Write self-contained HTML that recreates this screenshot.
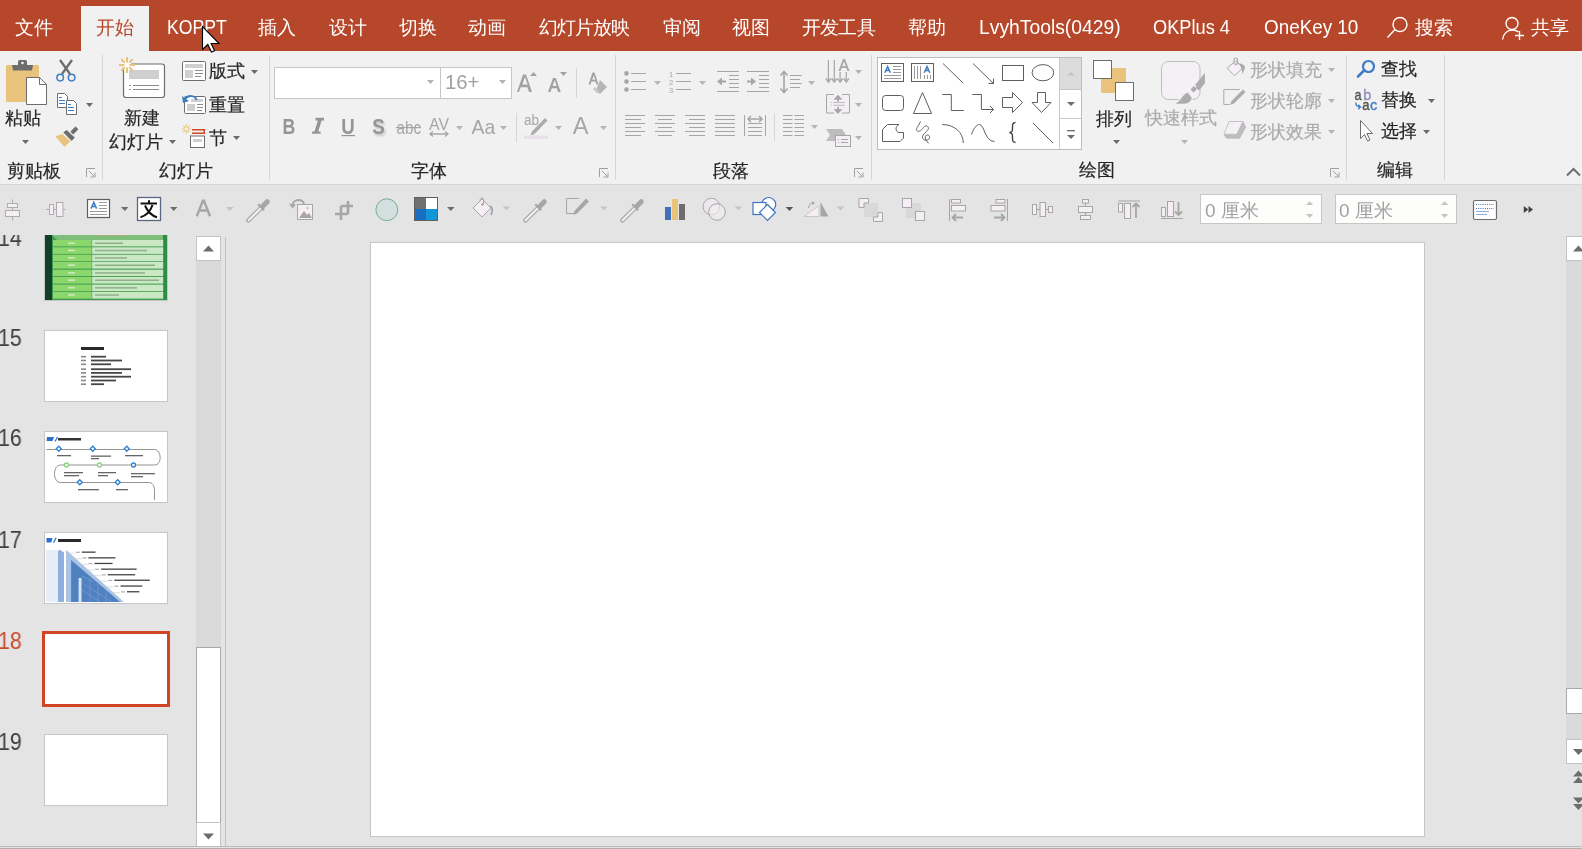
<!DOCTYPE html>
<html><head><meta charset="utf-8">
<style>
*{margin:0;padding:0;box-sizing:border-box}
html,body{width:1582px;height:849px;overflow:hidden;background:#e4e4e4;font-family:"Liberation Sans",sans-serif;position:relative}
.a{position:absolute;white-space:nowrap;will-change:transform}
#ov{position:absolute;left:0;top:0;width:1582px;height:849px;overflow:visible}
.tab{will-change:transform;position:absolute;top:17px;font-size:18.5px;line-height:22px;color:#fff;white-space:nowrap}
.lt{display:inline-block;transform-origin:0 50%;font-size:19.5px;position:relative;top:-1px}
.t{position:absolute;font-size:18px;line-height:22px;color:#262626;white-space:nowrap;will-change:transform;-webkit-text-stroke:.2px currentColor}
.d{color:#ababab}
.num{will-change:transform;position:absolute;left:-2px;font-size:23px;line-height:26px;color:#404040;transform:scaleX(.93);transform-origin:0 0}
.th{position:absolute;left:44px;width:124px;height:72px;background:#fff;border:1px solid #c6c6c6}
</style></head><body>
<!-- title bar -->
<div class="a" style="left:0;top:0;width:1582px;height:51px;background:#b7472a"></div>
<div class="a" style="left:81px;top:6px;width:68px;height:46px;background:#f1f1f1"></div>
<!-- ribbon -->
<div class="a" style="left:0;top:51px;width:1582px;height:133px;background:#f1f1f1"></div>
<div class="a" style="left:0;top:184px;width:1582px;height:1px;background:#d5d5d5"></div>
<!-- slide -->
<div class="a" style="left:370px;top:242px;width:1055px;height:595px;background:#fff;border:1px solid #c6c6c6"></div>

<svg id="ov" viewBox="0 0 1582 849"><defs><filter id="blur1" x="-50%" y="-50%" width="200%" height="200%"><feGaussianBlur stdDeviation=".8"/></filter></defs>
<!-- separators -->
<g fill="#d6d6d6">
<rect x="102" y="55" width="1" height="125"/>
<rect x="269" y="55" width="1" height="125"/>
<rect x="615" y="55" width="1" height="125"/>
<rect x="871" y="55" width="1" height="125"/>
<rect x="1346" y="55" width="1" height="125"/>
<rect x="1444" y="55" width="1" height="125"/>
<rect x="576" y="68" width="1" height="30"/>
<rect x="516" y="113" width="1" height="29"/>
<rect x="774" y="113" width="1" height="28"/>
</g>
<!-- dropdown arrows dark -->
<g fill="#6b6b6b">
<path d="M22 140h7l-3.5 4z"/>
<path d="M86 103h7l-3.5 4z"/>
<path d="M169 140h7l-3.5 4z"/>
<path d="M251 70h7l-3.5 4z"/>
<path d="M233 136h7l-3.5 4z"/>
<path d="M1113 140h7l-3.5 4z"/>
<path d="M1428 99h7l-3.5 4z"/>
<path d="M1423 130h7l-3.5 4z"/>
</g>
<!-- light arrows -->
<g fill="#b4b4b4">
<path d="M427 80h7l-3.5 4z"/>
<path d="M499 80h7l-3.5 4z"/>
<path d="M456 126h7l-3.5 4z"/>
<path d="M500 126h7l-3.5 4z"/>
<path d="M555 126h7l-3.5 4z"/>
<path d="M600 126h7l-3.5 4z"/>
<path d="M654 81h7l-3.5 4z"/>
<path d="M699 81h7l-3.5 4z"/>
<path d="M808 81h7l-3.5 4z"/>
<path d="M855 70h7l-3.5 4z"/>
<path d="M855 103h7l-3.5 4z"/>
<path d="M811 125h7l-3.5 4z"/>
<path d="M855 136h7l-3.5 4z"/>
<path d="M1181 140h7l-3.5 4z"/>
<path d="M1328 68h7l-3.5 4z"/>
<path d="M1328 99h7l-3.5 4z"/>
<path d="M1328 130h7l-3.5 4z"/>
</g>
<!-- dialog launchers -->
<g fill="none" stroke="#a0a0a0" stroke-width="1">
<path d="M86.5 177v-8.5h8.5 M89 171l5.5 5.5 M95 172.5v4.5h-4.5"/>
<path d="M599.5 177v-8.5h8.5 M602 171l5.5 5.5 M608 172.5v4.5h-4.5"/>
<path d="M854.5 177v-8.5h8.5 M857 171l5.5 5.5 M863 172.5v4.5h-4.5"/>
<path d="M1330.5 177v-8.5h8.5 M1333 171l5.5 5.5 M1339 172.5v4.5h-4.5"/>
</g>
<!-- collapse chevron -->
<path d="M1567 175.5l6.5-6.5 6.5 6.5" fill="none" stroke="#6d6d6d" stroke-width="2"/>

<!-- ===== Clipboard ===== -->
<rect x="6" y="65" width="33" height="37" rx="1.5" fill="#e9c27b"/>
<path d="M12 65h21l-1 5.5h-19z" fill="#6d6d6d"/>
<rect x="18" y="60" width="9" height="6" rx="1.5" fill="#6d6d6d"/>
<circle cx="22.5" cy="63" r="1.3" fill="#f1f1f1"/>
<path d="M26.5 77.5h13l7 7v20h-20z" fill="#fff" stroke="#6d6d6d" stroke-width="1"/>
<path d="M39.5 77.5v7h7" fill="none" stroke="#6d6d6d" stroke-width="1"/>
<!-- scissors -->
<path d="M60 60l10 14M72 60l-10 14" stroke="#6d6d6d" stroke-width="2.3" fill="none"/>
<circle cx="60.2" cy="77.6" r="3.3" fill="none" stroke="#3e7cc4" stroke-width="1.5"/>
<circle cx="71.6" cy="77.6" r="3.3" fill="none" stroke="#3e7cc4" stroke-width="1.5"/>
<!-- copy -->
<path d="M57.5 93.5h7l3 3v11h-10z" fill="#fff" stroke="#6d6d6d"/>
<path d="M66.5 100.5h7l3 3v11h-10z" fill="#fff" stroke="#6d6d6d"/>
<g stroke="#3e7cc4" stroke-width="1"><path d="M59 97.5h3M59 100.5h6M59 103.5h6M68 104.5h3M68 107.5h6M68 110.5h6"/></g>
<!-- format painter -->
<path d="M55.3 136.3l7.1-2.3 7.9 7.2-5.8 5.8z" fill="#e9c27b"/>
<path d="M64.1 132.4l2.5-1.6 7.4 6.9-2.4 2.4z" fill="#6d6d6d" stroke="#6d6d6d" stroke-width="1.2" stroke-linejoin="round"/>
<path d="M70.9 131.7l4.6-4.8 2.4 2.3-4.6 4.8z" fill="#6d6d6d" stroke="#6d6d6d" stroke-width="1" stroke-linejoin="round"/>

<!-- ===== New slide ===== -->
<rect x="123.5" y="64" width="41" height="33.5" rx="2.5" fill="#fff" stroke="#6d6d6d" stroke-width="1.2"/>
<rect x="129" y="70" width="30" height="9" fill="#cfcfcf"/>
<g stroke="#8d8d8d" stroke-width="1"><path d="M129 85.5h2M133 85.5h26M129 89.5h2M133 89.5h26"/></g>
<circle cx="127" cy="65" r="4.5" fill="#fff"/><g stroke="#e9c27b" stroke-width="2"><path d="M127 57v5.5M127 67.5v5.5M119 65h5.5M129.5 65h5.5M121.3 59.3l3.6 3.6M129.1 67.1l3.6 3.6M132.7 59.3l-3.6 3.6M124.9 67.1l-3.6 3.6"/></g>
<!-- layout -->
<rect x="182.5" y="61.5" width="23" height="19" rx="1" fill="#fff" stroke="#6d6d6d"/>
<rect x="185" y="64" width="18" height="4" fill="#cfcfcf"/>
<rect x="185" y="70" width="8" height="8" fill="#cfcfcf"/>
<g stroke="#8d8d8d"><path d="M195 70.5h8M195 73.5h8M195 76.5h6"/></g>
<!-- reset -->
<rect x="184.5" y="96.5" width="21" height="17" rx="1" fill="#fff" stroke="#6d6d6d"/>
<rect x="187" y="104" width="8" height="7" fill="#cfcfcf"/>
<rect x="191" y="99" width="12" height="3" fill="#cfcfcf"/>
<g stroke="#8d8d8d"><path d="M197 104.5h6M197 107.5h6M197 110.5h5"/></g>
<path d="M196.5 100c-1-4.5-8-5.5-11.5-1" fill="none" stroke="#3e7cc4" stroke-width="2"/>
<path d="M182 96l1 7 6-2z" fill="#3e7cc4"/>
<!-- section -->
<g stroke="#e9c27b" stroke-width="1.2"><path d="M186.3 124.5v3M186.3 130.5v3M181.8 129h3M187.8 129h3M183.2 125.9l2 2M187.4 130.1l2 2M189.4 125.9l-2 2M185.2 130.1l-2 2"/></g>
<path d="M192 129.8h12.3v3.5h-12.3" fill="none" stroke="#d24726" stroke-width="1.5"/>
<rect x="190.5" y="136" width="14" height="11.5" fill="#fff" stroke="#6d6d6d"/>
<rect x="193" y="139" width="9" height="3" fill="#cfcfcf"/>

<!-- ===== Font ===== -->
<rect x="274.5" y="67.5" width="166" height="31" fill="#fff" stroke="#c6c6c6"/>
<rect x="440.5" y="67.5" width="71" height="31" fill="#fff" stroke="#c6c6c6"/>
<path d="M427 80h7l-3.5 4z" fill="#b4b4b4"/>
<path d="M499 80h7l-3.5 4z" fill="#b4b4b4"/>
<!-- grow/shrink -->
<g fill="#a2a2a2">
<path d="M517 92l6-17.5h3l6 17.5h-3l-1.6-4.8h-6.8l-1.6 4.8zM522.4 84.6h5.2l-2.6-7.6z"/>
<path d="M530 76l3.5-4 3.5 4z"/>
<path d="M548 92l5-14h2.8l5 14h-2.7l-1.3-3.8h-5l-1.3 3.8zM552.6 85.9h4l-2-6z"/>
<path d="M560 72h7l-3.5 4z"/>
</g>
<!-- clear formatting -->
<path d="M588.5 84.5l4-12h2l4 12h-2l-1-3h-4l-1 3zM592.3 79.7h2.9l-1.45-4.5z" fill="#a2a2a2"/>
<path d="M600 80l7 7-7 7-4-4z" fill="#b5b5b5"/>
<path d="M595 87l4.5 4.5-2 2-4.5-4.5z" fill="#c8c8c8"/>
<!-- B I U S -->
<text x="282.5" y="133.7" font-family="Liberation Sans" font-weight="bold" font-size="22" fill="#959595" textLength="12.8" lengthAdjust="spacingAndGlyphs">B</text>
<path d="M315.5 117.8h8.5v2.6h-2.4l-3.4 11.1h2.4v2.2h-8.5v-2.2h2.4l3.4-11.1h-2.4z" fill="#959595"/>
<text x="341.3" y="133.7" font-family="Liberation Sans" font-weight="bold" font-size="22" fill="#959595" textLength="13.5" lengthAdjust="spacingAndGlyphs">U</text>
<rect x="341.5" y="135" width="13.5" height="1.2" fill="#959595"/>
<text x="373.5" y="135.5" font-family="Liberation Sans" font-weight="bold" font-size="22" fill="#c4c4c4" filter="url(#blur1)" textLength="12.5" lengthAdjust="spacingAndGlyphs">S</text>
<text x="372.3" y="133.7" font-family="Liberation Sans" font-weight="bold" font-size="22" fill="#959595" textLength="12.5" lengthAdjust="spacingAndGlyphs">S</text>
<text x="396.5" y="133.7" font-family="Liberation Sans" font-size="18.5" fill="#a6a6a6" textLength="24.5" lengthAdjust="spacingAndGlyphs">abc</text>
<rect x="396" y="127" width="25" height="1.2" fill="#a6a6a6"/>
<text x="429" y="129.5" font-family="Liberation Sans" font-size="16" fill="#a6a6a6" textLength="20" lengthAdjust="spacingAndGlyphs">AV</text>
<path d="M430 134h18M433 131.5l-3 2.5 3 2.5M445 131.5l3 2.5-3 2.5" fill="none" stroke="#a6a6a6" stroke-width="1.3"/>
<text x="471.5" y="133.7" font-family="Liberation Sans" font-size="21" fill="#a6a6a6" textLength="23.7" lengthAdjust="spacingAndGlyphs">Aa</text>
<!-- highlight -->
<text x="524" y="125" font-family="Liberation Sans" font-size="14" fill="#a6a6a6" textLength="15" lengthAdjust="spacingAndGlyphs">ab</text>
<path d="M545 118l2.5 2.5-13 13.5-4 1.5 1.5-4z" fill="#ababab"/>
<rect x="524" y="135.5" width="24" height="3.5" fill="#e8dfe8"/>
<!-- font color -->
<text x="572.7" y="133.7" font-family="Liberation Sans" font-size="23" fill="#a6a6a6" textLength="15.8" lengthAdjust="spacingAndGlyphs">A</text>

<!-- ===== Paragraph ===== -->
<g fill="#a6a6a6">
<circle cx="626.5" cy="73.4" r="2.3"/><circle cx="626.5" cy="81.6" r="2.3"/><circle cx="626.5" cy="89.5" r="2.3"/>
</g>
<g stroke="#a6a6a6" stroke-width="1" fill="none">
<path d="M631 73.5h15M631 81.5h15M631 89.5h15"/>
<path d="M676 73.5h15M676 81.5h15M676 89.5h15"/>
<path d="M717 71.5h22M729 75.5h10M729 79.5h10M729 83.5h10M729 87.5h10M717 91.5h22"/>
<path d="M747 71.5h22M759 75.5h10M759 79.5h10M759 83.5h10M759 87.5h10M747 91.5h22"/>
<path d="M790 75.5h12M790 79.5h10M790 83.5h12M790 87.5h10"/>
</g>
<g font-family="Liberation Sans" font-size="7.5" fill="#a6a6a6"><text x="669" y="77">1</text><text x="669" y="85">2</text><text x="669" y="93">3</text></g>
<path d="M717 81.5l5-4v3h4v2h-4v3z" fill="#a6a6a6"/>
<path d="M756 81.5l-5-4v3h-4v2h4v3z" fill="#a6a6a6"/>
<path d="M784 72v20M780.5 75.5l3.5-4 3.5 4M780.5 88.5l3.5 4 3.5-4" fill="none" stroke="#a6a6a6" stroke-width="1.6"/>
<!-- text direction -->
<g fill="none" stroke="#a6a6a6" stroke-width="1.2"><path d="M828.4 60v20M834.3 60v20M840.1 72v8M846.3 72v8"/><path d="M825.9 78.5l2.5 3.5 2.5-3.5M831.8 78.5l2.5 3.5 2.5-3.5M837.6 78.5l2.5 3.5 2.5-3.5M843.8 78.5l2.5 3.5 2.5-3.5" stroke-width="1.5"/></g>
<path d="M838.5 71l4.5-12h2l4.5 12h-2l-1.1-3h-4.8l-1.1 3zM842.2 66.3h3.6l-1.8-5z" fill="#a6a6a6"/>
<!-- align text -->
<rect x="826.5" y="94.5" width="23" height="18.5" fill="#f4eff4"/>
<path d="M834 94.5h-7.5v18.5h7.5M842 94.5h7.5v18.5h-7.5" fill="none" stroke="#a6a6a6"/>
<path d="M838 96v5.5M838 107v5.5" fill="none" stroke="#a6a6a6" stroke-width="1.8"/>
<path d="M834.3 99.2l3.7-4 3.7 4zM834.3 109.5l3.7 4 3.7-4z" fill="#a6a6a6" stroke="#a6a6a6" stroke-width=".8" stroke-linejoin="round"/>
<path d="M831 102.5h1M833.5 102.5h11.5M831 105.3h1M833.5 105.3h11.5" stroke="#b4b4b4" stroke-width=".9"/>
<!-- smartart -->
<path d="M826 129h16l4 6-4 6h-16l4-6z" fill="#bdbdbd"/>
<rect x="835.5" y="135.5" width="15" height="11" fill="#f4eff4" stroke="#a6a6a6"/>
<path d="M838 139.5h1M841 139.5h7M838 142.5h1M841 142.5h7" stroke="#a6a6a6"/>
<!-- aligns -->
<g stroke="#a6a6a6" stroke-width="1" fill="none">
<path d="M625 115.5h20M625 119.5h16M625 123.5h20M625 127.5h16M625 131.5h20M625 135.5h16"/>
<path d="M655 115.5h20M658 119.5h14M655 123.5h20M658 127.5h14M655 131.5h20M658 135.5h14"/>
<path d="M685 115.5h20M689 119.5h16M685 123.5h20M689 127.5h16M685 131.5h20M689 135.5h16"/>
<path d="M715 115.5h20M715 119.5h20M715 123.5h20M715 127.5h20M715 131.5h20M715 135.5h20"/>
<path d="M744.5 115v21M765.5 115v21M748 123.5h14M748 127.5h14M748 131.5h14M748 135.5h14"/>
<path d="M783 115.5h9.5M783 119.5h9.5M783 123.5h9.5M783 127.5h9.5M783 131.5h9.5M783 135.5h9.5M794.5 115.5h9.5M794.5 119.5h9.5M794.5 123.5h9.5M794.5 127.5h9.5M794.5 131.5h9.5M794.5 135.5h9.5"/>
</g>
<path d="M748 119h14M751 116l-3 3 3 3M759 116l3 3-3 3" fill="none" stroke="#a6a6a6" stroke-width="1.5"/>
<!-- ===== Drawing gallery ===== -->
<rect x="877.5" y="57.5" width="204" height="92" fill="#fff" stroke="#bdbdbd"/>
<rect x="1060" y="58" width="21" height="31.5" fill="#dcdcdc"/>
<path d="M1059.5 58v91M1060 89.5h21M1060 118.5h21" stroke="#c8c8c8" fill="none"/>
<path d="M1067.5 75.5l3.5-3.5 3.5 3.5z" fill="#c2c2c2"/>
<path d="M1067 102h8l-4 4z" fill="#6d6d6d"/>
<path d="M1067 130.5h8M1067 135h8l-4 4z" fill="#6d6d6d" stroke="#6d6d6d" stroke-width="0"/>
<rect x="1067" y="130" width="8" height="1.3" fill="#6d6d6d"/>
<g fill="none" stroke="#5f5f5f" stroke-width="1">
<rect x="881.5" y="63.5" width="22" height="18"/>
<path d="M893 66.5h8M893 69.5h8M893 72.5h8M884 75.5h17M884 78.5h17" stroke="#9a9a9a"/>
<rect x="911.5" y="63.5" width="22" height="18"/>
<path d="M914.5 66v13M917.5 66v13M920.5 66v13M924.5 75v4M927.5 75v4M930.5 75v4" stroke="#9a9a9a"/>
<path d="M943 63.5l20 19.5"/>
<path d="M973 63.5l20.5 20M993.5 78.5v5h-5"/>
<rect x="1002.5" y="65.5" width="21" height="15"/>
<ellipse cx="1042.9" cy="72.7" rx="10.8" ry="8.1"/>
<rect x="882.5" y="95.5" width="21" height="15" rx="3"/>
<path d="M922.5 92.5l9 21h-18z"/>
<path d="M942.3 94.5h9v16h12.5"/>
<path d="M972.4 94.5h9v15h12.5M990 106l3.5 3.5-3.5 3.5"/>
<path d="M1002.5 97.5h10v-5l10 10-10 10v-5h-10z"/>
<path d="M1037.5 92.5h8v10h5.5l-9.5 10-9.5-10h5.5z"/>
<path d="M882.5 129.5l5-5h11.5c-4 2-4 7 0 8h4.5v5.5l-3.5 3.5h-17.5z"/>
<path d="M920.4 121.4C919.5 125 915.5 128 916.8 130.5 918 132.5 921 131 923.5 127.5 925.5 125 928.5 125.5 928.4 128.6 928.2 131 922 134 922.5 137.5 923 140.5 927 141 929 139 930.5 137 929 134.5 927 135 924.5 135.5 924.5 139 928.6 143.4" stroke-width="1"/>
<path d="M942.3 124.5c12 0 21 8 21 18.5"/>
<path d="M971.5 134.5c2-6 5-10 8-10 5 0 5 17 15 17"/>
<path d="M1015.5 122.5c-3 0-3 2-3 5s0 4.5-3 5c3 .5 3 2 3 5s0 4.5 3 5" stroke-width="1.4" stroke="#404040"/>
<path d="M1033 123l20 20"/>
</g>
<path d="M884.8 72.8l2.8-6.2 2.8 6.2M885.9 70.6h3.4" fill="none" stroke="#3e7cc4" stroke-width="1.5"/>
<path d="M924.2 72.8l2.8-6.2 2.8 6.2M925.3 70.6h3.4" fill="none" stroke="#3e7cc4" stroke-width="1.5"/>
<!-- arrange -->
<rect x="1101" y="68" width="25" height="25" fill="#e9c27b"/>
<rect x="1093.5" y="60.5" width="18" height="18" fill="#fff" stroke="#6d6d6d"/>
<rect x="1115.5" y="82.5" width="18" height="18" fill="#fff" stroke="#6d6d6d"/>
<!-- quick styles -->
<rect x="1161.5" y="61.5" width="38.5" height="38" rx="7" fill="#f5f0f5" stroke="#bdbdbd"/>
<path d="M1205 73v10l-6 7.5-3.2-2.8z" fill="#adadad" stroke="#f1f1f1" stroke-width="0"/>
<path d="M1188 92c-4 1-6 4-8 7s-4 4.5-7.5 5.3h12c4 0 7.5-3 8-6.5z" fill="#adadad" stroke="#f1f1f1" stroke-width="1.2"/>
<path d="M1190.5 89.5l3.3-3.5 3.2 3-3.3 3.5z" fill="#adadad"/>
<path d="M1195 85l9.8-12v10l-6.3 5.3z" fill="#adadad"/>
<!-- shape fill -->
<path d="M1227.1 68.3l8.5-7.5 7.4 6.9-8.5 8z" fill="#f5f0f5" stroke="#ababab"/>
<path d="M1234 64.5v-5c0-2 3.5-2 3.5 0v5" fill="none" stroke="#ababab" stroke-width="1.1"/>
<circle cx="1236" cy="64.3" r="1" fill="#ababab"/>
<path d="M1238.8 63.5c3 0 6.5 1.5 6.2 4.5l-2.5 6.2-.8-5.5z" fill="#ababab"/>
<!-- shape outline -->
<path d="M1239.8 89.5h-16v15h6" fill="none" stroke="#ababab"/>
<path d="M1243 89.5l2.5 2.5-11.5 11.5-3.8 1.3 1.3-3.8z" fill="#ababab"/>
<!-- shape effects -->
<path d="M1229.2 121.3h13.8l3.2 5.8-6.4 11.7h-13l-2.9-3.2z" fill="#bdbdbd"/>
<path d="M1229.2 121.5h13.8l-6.3 12.7h-12.8z" fill="#f5f0f5" stroke="#bdbdbd" stroke-width=".8"/>
<!-- ===== Editing ===== -->
<circle cx="1368.5" cy="66.5" r="5.5" fill="none" stroke="#3e7cc4" stroke-width="2.2"/>
<path d="M1358 76.5l6-6" stroke="#3e7cc4" stroke-width="2.6" stroke-linecap="round"/>
<text x="1354.5" y="99.7" font-family="Liberation Sans" font-size="15" fill="#505050" stroke="#505050" stroke-width=".35" textLength="7" lengthAdjust="spacingAndGlyphs">a</text>
<text x="1363.3" y="99.7" font-family="Liberation Sans" font-size="14.5" fill="#8b8bb8" stroke="#8b8bb8" stroke-width=".35" textLength="8" lengthAdjust="spacingAndGlyphs">b</text>
<text x="1362.3" y="109.7" font-family="Liberation Sans" font-size="15" fill="#505050" stroke="#505050" stroke-width=".35" textLength="7.3" lengthAdjust="spacingAndGlyphs">a</text>
<text x="1370" y="109.7" font-family="Liberation Sans" font-size="15" fill="#3e7cc4" stroke="#3e7cc4" stroke-width=".35" textLength="7.3" lengthAdjust="spacingAndGlyphs">c</text>
<path d="M1355.8 102.5c0 3 1 4.5 4.5 4.5M1358.3 104.8l2.2 2.2-2.2 2.2" fill="none" stroke="#3e7cc4" stroke-width="1.3"/>
<path d="M1360.5 120.5v18l4-4 3 6.5 2.5-1-3-6.5h5.5z" fill="#fff" stroke="#6d6d6d"/>
<!-- ===== Toolbar row ===== -->
<g fill="#f5eff5" stroke="#adadad" stroke-width="1">
<path d="M12.5 199.5v21" fill="none"/>
<rect x="7.5" y="203.5" width="10" height="4"/>
<rect x="5.5" y="210.5" width="14" height="6"/>
<path d="M46 209.5h19.5" fill="none"/>
<rect x="49.5" y="204.5" width="4" height="10"/>
<rect x="56.5" y="202.5" width="6.5" height="14"/>
</g>
<rect x="87.5" y="199.5" width="22" height="18" fill="#fff" stroke="#5f5f5f" stroke-width="1.2"/>
<path d="M91 208.6l2.8-6.2 2.8 6.2M92.1 206.4h3.4" fill="none" stroke="#3e7cc4" stroke-width="1.5"/>
<path d="M99 202.5h8M99 205.5h8M99 208.5h8M90 211.5h17M90 214.5h17" stroke="#9a9a9a"/>
<path d="M121 207h7.5l-3.75 4z" fill="#6d6d6d"/>
<rect x="137.5" y="197.5" width="23" height="23" fill="#fff" stroke="#5a6680" stroke-width="1.3"/>
<path d="M149 200.3v3M140.5 203.6h16.5M152.5 205c-2 6-6 10.5-12 12.2M145 205.5c2.5 6 6.5 10 12 11.8" fill="none" stroke="#111" stroke-width="2"/>
<path d="M170 207h7.5l-3.75 4z" fill="#6d6d6d"/>
<path d="M196.8 216.2l6.5-16.5M210 216.2l-6.5-16.5M199.5 210.5h8" fill="none" stroke="#a6a6a6" stroke-width="2.4"/>
<path d="M226 207h7.5l-3.75 4z" fill="#c4c4c4"/>
<!-- eyedropper -->
<g id="eyed">
<path d="M261 208l-12.6 12.4" stroke="#a6a6a6" stroke-width="4.4" stroke-linecap="round"/>
<path d="M261 208l-12.4 12.2" stroke="#f5eff5" stroke-width="2.2" stroke-linecap="round"/>
<path d="M263 206l4.3-4.3" stroke="#a6a6a6" stroke-width="5" stroke-linecap="round"/>
<path d="M258.2 204.3l6 6" stroke="#a6a6a6" stroke-width="2.2"/>
</g>
<!-- change picture -->
<rect x="297.5" y="204.5" width="15" height="15" fill="#f5eff5" stroke="#a6a6a6"/>
<path d="M299 218l5-7 3 4 2-2 3 5z" fill="#a6a6a6"/>
<circle cx="307.5" cy="208" r="1.3" fill="#c8c8c8"/>
<path d="M292.5 206c0-4 3-6 6-6s5 2 5.5 4" fill="none" stroke="#a6a6a6" stroke-width="2"/>
<path d="M289 203.5l3.5 5 3.5-4z" fill="#a6a6a6"/>
<!-- crop -->
<path d="M341 206v14M341 206h12M348 201v13M335 214h13" fill="none" stroke="#a6a6a6" stroke-width="2.6"/>
<path d="M341 207.5v6.5h5.5M341 207.5h5.5v6.5" fill="none" stroke="#a6a6a6" stroke-width="0"/>
<!-- circle -->
<circle cx="386.8" cy="209.7" r="10.9" fill="#d4dfdf" stroke="#73ad90" stroke-width="1"/>
<!-- color square -->
<rect x="414.5" y="197.5" width="23" height="23" fill="#fff" stroke="#606060"/>
<rect x="415" y="198" width="11" height="11" fill="#707070"/>
<rect x="415" y="209" width="11" height="11" fill="#1a6fc4"/>
<rect x="426" y="209" width="11" height="11" fill="#1296d8"/>
<path d="M447 207h7.5l-3.75 4z" fill="#6d6d6d"/>
<!-- paint bucket -->
<path d="M473 208l9-9 9 9-9 9z" fill="#f5eff5" stroke="#a6a6a6"/>
<path d="M480 200.5c0-3 3-3.5 3.5-1v5" fill="none" stroke="#a6a6a6"/>
<circle cx="482.5" cy="204.5" r="1.3" fill="#a6a6a6"/>
<path d="M490 206c2.5 1 3 5 1 9" fill="none" stroke="#a6a6a6" stroke-width="1.8"/>
<path d="M502.8 206.5h7.5l-3.75 4z" fill="#c4c4c4"/>
<use href="#eyed" x="277" y="0"/>
<!-- shape outline pen -->
<path d="M579 198.5h-12.5v15h7" fill="none" stroke="#a6a6a6"/>
<path d="M586 198.5l3 3-12 12-4 1.5 1.5-4z" fill="#a6a6a6"/>
<path d="M600 206.5h7.5l-3.75 4z" fill="#c4c4c4"/>
<use href="#eyed" x="374" y="0"/>
<!-- chart -->
<rect x="665" y="207" width="6" height="13" fill="#3e73b8"/>
<rect x="672" y="199" width="6" height="21" fill="#e9c27b"/>
<rect x="679" y="204" width="6" height="16" fill="#6d6d6d"/>
<!-- merge shapes -->
<circle cx="711.4" cy="206.5" r="8.3" fill="#ebe7eb" stroke="#a6a6a6"/>
<circle cx="717" cy="212" r="8.3" fill="#f2eef2" stroke="#a6a6a6" fill-opacity=".6"/>
<path d="M734.7 206.5h7.5l-3.75 4z" fill="#c4c4c4"/>
<!-- edit shapes -->
<path d="M762 202.5a7 7 0 1 1 6 9" fill="#fff" stroke="#3e73c4" stroke-width="1.2"/>
<rect x="753" y="202.5" width="13" height="12" fill="#fff" stroke="#3e73c4" stroke-width="1.2"/>
<path d="M767.5 204.5l8 8-8 8-8-8z" fill="#fff" stroke="#3e73c4" stroke-width="1.2"/>
<path d="M785.7 207h7.5l-3.75 4z" fill="#555"/>
<!-- rotate -->
<path d="M804 216.5l15-11v11z" fill="#f5eff5" stroke="#c8c8c8"/>
<path d="M820.5 202l8 14.5h-8z" fill="#a6a6a6"/>
<path d="M808.5 208c0-3 2-5 5-5" fill="none" stroke="#a6a6a6"/>
<path d="M812 201l3 2-3 2z" fill="#a6a6a6"/>
<path d="M836.8 206.5h7.5l-3.75 4z" fill="#c4c4c4"/>
<!-- bring forward / send backward -->
<rect x="864" y="203" width="14" height="14" fill="#d8d8d8"/>
<path d="M859 198.5h9.5v4.5h-4.5v4.5h-5z" fill="#f5eff5" stroke="#a6a6a6"/>
<path d="M878 212.5h4.5v9h-9v-4.5h4.5z" fill="#f5eff5" stroke="#a6a6a6"/>
<rect x="906" y="203" width="15" height="15" fill="#d8d8d8"/>
<rect x="902.5" y="198.5" width="9" height="9" fill="#f5eff5" stroke="#a6a6a6"/>
<rect x="915.5" y="211.5" width="9" height="9" fill="#f5eff5" stroke="#a6a6a6"/>
<!-- align left/right/etc -->
<g fill="#f5eff5" stroke="#a6a6a6">
<path d="M949.5 199v22M1007.5 199v22" fill="none"/>
<rect x="951.5" y="199.5" width="9" height="3.5"/>
<rect x="951.5" y="205.5" width="14" height="5.5"/>
<rect x="996" y="199.5" width="9" height="3.5"/>
<rect x="991" y="205.5" width="14" height="5.5"/>
<rect x="1032.5" y="204.5" width="4" height="10"/>
<rect x="1040" y="202.5" width="5.5" height="14"/>
<rect x="1048.5" y="206.5" width="4" height="6"/>
<path d="M1036.5 209.5h3.5M1045.5 209.5h3" fill="none"/>
<rect x="1082.5" y="199.5" width="6" height="3.5"/>
<rect x="1078.5" y="206.5" width="14" height="6"/>
<rect x="1080.5" y="215.5" width="10" height="4"/>
<path d="M1085.5 203v3.5M1085.5 212.5v3" fill="none"/>
<path d="M1118 201h22" fill="none"/>
<rect x="1118.5" y="203.5" width="4" height="8.5"/>
<rect x="1124.5" y="203.5" width="6" height="15"/>
<path d="M1161 218.5h22" fill="none"/>
<rect x="1161.5" y="207.5" width="4" height="9"/>
<rect x="1167.5" y="201.5" width="6" height="15"/>
</g>
<g fill="none" stroke="#a6a6a6" stroke-width="1.8">
<path d="M952 217.5h11M956 214l-3.5 3.5 3.5 3.5"/>
<path d="M1005 217.5h-11M1001 214l3.5 3.5-3.5 3.5"/>
<path d="M1136 218v-14M1132.5 207l3.5-3.5 3.5 3.5"/>
<path d="M1178.5 202v13M1175 211.5l3.5 3.5 3.5-3.5"/>
</g>
<!-- spinboxes -->
<rect x="1200.5" y="194.5" width="121" height="29" fill="#fdfdfc" stroke="#c6c6c6"/>
<rect x="1335.5" y="194.5" width="121" height="29" fill="#fdfdfc" stroke="#c6c6c6"/>
<g fill="#c4c4c4">
<path d="M1306 205l3.6-3.8 3.6 3.8z"/><path d="M1306 214h7.2l-3.6 4z"/>
<path d="M1441 205l3.6-3.8 3.6 3.8z"/><path d="M1441 214h7.2l-3.6 4z"/>
</g>
<!-- text layout -->
<rect x="1473.5" y="200.5" width="23" height="19" rx="1.5" fill="#fff" stroke="#6d6d6d" stroke-width="1.2"/>
<path d="M1476 204.5h18M1476 208.5h18" stroke="#3e73c4" stroke-width="1" stroke-dasharray="1 1.2"/>
<path d="M1476 211.5h13M1476 214.5h11" stroke="#8fb0dc" stroke-width="1"/>
<path d="M1523.8 206l4.5 3.5-4.5 3.5zM1528.5 206l4.5 3.5-4.5 3.5z" fill="#404040"/>
</svg>
<div class="tab" style="left:15px">文件</div>
<div class="tab" style="left:96px;color:#b7472a">开始</div>
<div class="tab" style="left:167px"><span class="lt" style="transform:scaleX(.905)">KOPPT</span></div>
<div class="tab" style="left:258px">插入</div>
<div class="tab" style="left:329px">设计</div>
<div class="tab" style="left:399px">切换</div>
<div class="tab" style="left:468px">动画</div>
<div class="tab" style="left:539px;letter-spacing:-1.1px">幻灯片放映</div>
<div class="tab" style="left:663px">审阅</div>
<div class="tab" style="left:732px">视图</div>
<div class="tab" style="left:802px;letter-spacing:-0.8px">开发工具</div>
<div class="tab" style="left:908px">帮助</div>
<div class="tab" style="left:979px"><span class="lt" style="transform:scaleX(.99)">LvyhTools(0429)</span></div>
<div class="tab" style="left:1153px"><span class="lt" style="transform:scaleX(.934)">OKPlus 4</span></div>
<div class="tab" style="left:1264px"><span class="lt" style="transform:scaleX(.967)">OneKey 10</span></div>
<div class="tab" style="left:1415px">搜索</div>
<div class="tab" style="left:1531px">共享</div>

<!-- ribbon text -->
<div class="t" style="left:5px;top:107px">粘贴</div>
<div class="t" style="left:7px;top:160px">剪贴板</div>
<div class="t" style="left:124px;top:107px">新建</div>
<div class="t" style="left:109px;top:131px">幻灯片</div>
<div class="t" style="left:209px;top:60px">版式</div>
<div class="t" style="left:209px;top:94px">重置</div>
<div class="t" style="left:209px;top:127px">节</div>
<div class="t" style="left:159px;top:160px">幻灯片</div>
<div class="t" style="left:411px;top:160px">字体</div>
<div class="t" style="left:713px;top:160px">段落</div>
<div class="t" style="left:1096px;top:108px">排列</div>
<div class="t d" style="left:1145px;top:107px">快速样式</div>
<div class="t d" style="left:1250px;top:59px">形状填充</div>
<div class="t d" style="left:1250px;top:90px">形状轮廓</div>
<div class="t d" style="left:1250px;top:121px">形状效果</div>
<div class="t" style="left:1079px;top:159px">绘图</div>
<div class="t" style="left:1381px;top:58px">查找</div>
<div class="t" style="left:1381px;top:89px">替换</div>
<div class="t" style="left:1381px;top:120px">选择</div>
<div class="t" style="left:1377px;top:159px">编辑</div>


<!-- combo text -->
<div class="a" style="left:445px;top:71px;font-size:21px;line-height:24px;color:#a0a0a0"><span class="lt" style="transform:scaleX(1.04)">16+</span></div>
<div class="a" style="left:1205px;top:199.5px;font-size:19px;line-height:22px;color:#a0a0a0">0 厘米</div>
<div class="a" style="left:1339px;top:199.5px;font-size:19px;line-height:22px;color:#a0a0a0">0 厘米</div>

<!-- thumbnails pane -->
<div class="a" style="left:196px;top:236px;width:25px;height:611px;background:#dadada"></div>
<div class="a" style="left:196px;top:236px;width:25px;height:25px;background:#fff;border:1px solid #c2c2c2"></div>
<div class="a" style="left:196px;top:647px;width:25px;height:176px;background:#fff;border:1px solid #a8a8a8"></div>
<div class="a" style="left:196px;top:822px;width:25px;height:25px;background:#fff;border:1px solid #c2c2c2"></div>
<div class="a" style="left:225px;top:237px;width:1px;height:610px;background:#c2c2c2"></div>
<div class="a" style="left:0;top:846px;width:1582px;height:1px;background:#b9b9b9"></div>
<div class="a" style="left:0;top:848px;width:1582px;height:1px;background:#b0b0b0"></div>

<!-- right scrollbar -->
<div class="a" style="left:1566px;top:236px;width:17px;height:528px;background:#dadada"></div>
<div class="a" style="left:1566px;top:236px;width:17px;height:25px;background:#fff;border:1px solid #c2c2c2;border-right:none"></div>
<div class="a" style="left:1566px;top:688px;width:17px;height:26px;background:#fff;border:1px solid #a8a8a8;border-right:none"></div>
<div class="a" style="left:1566px;top:739px;width:17px;height:25px;background:#fff;border:1px solid #c2c2c2;border-right:none"></div>

<div class="a" style="left:0;top:235px;width:196px;height:611px;overflow:hidden">
<!-- thumbnails -->
<div class="a" style="left:44px;top:-2px;width:124px;height:68px;background:#fff;border:1px solid #c4c4c4;overflow:hidden"><svg width="122" height="66" style="position:absolute;left:0;top:0"><rect width="122" height="66" fill="#3f9a52"/><rect x="0" y="0" width="7" height="66" fill="#123f26"/><path d="M6 0h113v6h-107z" fill="#7dbf7a"/><rect x="118" y="0" width="4" height="66" fill="#2f8c47"/><rect x="8" y="6" width="38.7" height="6.4" fill="#8cd76b"/><rect x="47.2" y="6" width="71" height="6.4" fill="#cbe8c4"/><rect x="23" y="8.5" width="7" height="1.3" fill="#d8f0c8"/><rect x="50" y="8.5" width="28" height="1.5" fill="#8fae8a"/><rect x="8" y="13.3" width="38.7" height="6.6" fill="#8cd76b"/><rect x="47.2" y="13.3" width="71" height="6.6" fill="#cbe8c4"/><rect x="23" y="15.8" width="7" height="1.3" fill="#d8f0c8"/><rect x="50" y="15.8" width="52" height="1.5" fill="#8fae8a"/><rect x="8" y="20.7" width="38.7" height="6.6" fill="#8cd76b"/><rect x="47.2" y="20.7" width="71" height="6.6" fill="#cbe8c4"/><rect x="23" y="23.2" width="7" height="1.3" fill="#d8f0c8"/><rect x="50" y="23.2" width="32" height="1.5" fill="#8fae8a"/><rect x="8" y="28" width="38.7" height="6.6" fill="#8cd76b"/><rect x="47.2" y="28" width="71" height="6.6" fill="#cbe8c4"/><rect x="23" y="30.5" width="7" height="1.3" fill="#d8f0c8"/><rect x="50" y="30.5" width="60" height="1.5" fill="#8fae8a"/><rect x="8" y="35.7" width="38.7" height="6.4" fill="#8cd76b"/><rect x="47.2" y="35.7" width="71" height="6.4" fill="#cbe8c4"/><rect x="23" y="38.2" width="7" height="1.3" fill="#d8f0c8"/><rect x="50" y="38.2" width="50" height="1.5" fill="#8fae8a"/><rect x="8" y="43" width="38.7" height="6.6" fill="#8cd76b"/><rect x="47.2" y="43" width="71" height="6.6" fill="#cbe8c4"/><rect x="23" y="45.5" width="7" height="1.3" fill="#d8f0c8"/><rect x="50" y="45.5" width="64" height="1.5" fill="#8fae8a"/><rect x="8" y="50.6" width="38.7" height="6.4" fill="#8cd76b"/><rect x="47.2" y="50.6" width="71" height="6.4" fill="#cbe8c4"/><rect x="23" y="53.1" width="7" height="1.3" fill="#d8f0c8"/><rect x="50" y="53.1" width="42" height="1.5" fill="#8fae8a"/><rect x="8" y="57.8" width="38.7" height="6.8" fill="#8cd76b"/><rect x="47.2" y="57.8" width="71" height="6.8" fill="#cbe8c4"/><rect x="23" y="60.3" width="7" height="1.3" fill="#d8f0c8"/><rect x="50" y="60.3" width="24" height="1.5" fill="#8fae8a"/><rect x="52" y="0" width="30" height="2" fill="#c9a86a" opacity=".6"/></svg></div>
<div class="th" style="top:95px"></div>
<div class="th" style="top:196px"></div>
<div class="th" style="top:297px"></div>
<div class="a" style="left:42px;top:396px;width:128px;height:76px;background:#fff;border:3px solid #d04526"></div>
<div class="th" style="top:499px"></div>
<div class="num" style="top:-10px">14</div>
<div class="num" style="top:90px">15</div>
<div class="num" style="top:190px">16</div>
<div class="num" style="top:292px">17</div>
<div class="num" style="top:393px;color:#c94a2a">18</div>
<div class="num" style="top:494px">19</div>
</div>
<svg class="a" style="left:0;top:0" width="1582" height="849" viewBox="0 0 1582 849">
<!-- title icons -->
<g fill="none" stroke="#fff" stroke-width="1.4">
<circle cx="1400" cy="24.5" r="7"/>
<path d="M1395 29.5l-7.5 8"/>
<circle cx="1512" cy="23.5" r="6"/>
<path d="M1502.5 39.5c1-6 5-9.5 10-9.5 2.5 0 4.5.8 6 2"/>
<path d="M1519.5 31v9M1515 35.5h9"/>
</g>
<!-- scroll arrows -->
<g fill="#6d6d6d">
<path d="M203 251.5l5.5-6 5.5 6z"/>
<path d="M203 833.5h11l-5.5 6z"/>
<path d="M1573 251.5l5.5-6 5.5 6z"/>
<path d="M1573 749h11l-5.5 6z"/>
<path d="M1573 776.5l5.5-6 5.5 6zM1573 783l5.5-6 5.5 6z"/>
<path d="M1573 797.5h11l-5.5 6zM1573 804h11l-5.5 6z"/>
</g>
<!-- thumb 15 -->
<rect x="81" y="347" width="23" height="3" fill="#2a2a2a"/>
<rect x="81" y="355.9" width="5" height="1.6" fill="#8a8a8a"/><rect x="91" y="355.8" width="15" height="1.8" fill="#474747"/>
<rect x="81" y="359.7" width="5" height="1.6" fill="#8a8a8a"/><rect x="91" y="359.6" width="31" height="1.8" fill="#474747"/>
<rect x="81" y="363.5" width="5" height="1.6" fill="#8a8a8a"/><rect x="91" y="363.4" width="20" height="1.8" fill="#474747"/>
<rect x="81" y="368.4" width="5" height="1.6" fill="#8a8a8a"/><rect x="91" y="368.3" width="40" height="1.8" fill="#474747"/>
<rect x="81" y="372.1" width="5" height="1.6" fill="#8a8a8a"/><rect x="91" y="372.0" width="31" height="1.8" fill="#474747"/>
<rect x="81" y="375.9" width="5" height="1.6" fill="#8a8a8a"/><rect x="91" y="375.8" width="40" height="1.8" fill="#474747"/>
<rect x="81" y="379.7" width="5" height="1.6" fill="#8a8a8a"/><rect x="91" y="379.6" width="25" height="1.8" fill="#474747"/>
<rect x="81" y="383.4" width="5" height="1.6" fill="#8a8a8a"/><rect x="91" y="383.3" width="13" height="1.8" fill="#474747"/>
<!-- thumb 16 -->
<path d="M47 437h7l-1.5 4h-6z" fill="#2f6fd0"/><path d="M55 441.5l2.5-4.5" stroke="#2f6fd0" stroke-width="1.2"/>
<rect x="58" y="438" width="23" height="2.5" fill="#333"/>
<path d="M46.5 449.5h108c7 0 8 15.5 0 15.5h-94c-8 0-8 17.5 0 17.5h88c4 0 6 3 6 8v9.5" fill="none" stroke="#777" stroke-width=".8"/>
<g fill="#fff" stroke="#2f7fd0" stroke-width="1.3">
<rect x="57" y="447" width="3.5" height="3.5" transform="rotate(45 58.75 448.75)"/>
<rect x="91" y="447" width="3.5" height="3.5" transform="rotate(45 92.75 448.75)"/>
<rect x="125" y="447" width="3.5" height="3.5" transform="rotate(45 126.75 448.75)"/>
<circle cx="133.5" cy="465" r="2" />
<rect x="78" y="480.5" width="3.5" height="3.5" transform="rotate(45 79.75 482.25)"/>
<rect x="116" y="480.5" width="3.5" height="3.5" transform="rotate(45 117.75 482.25)"/>
</g>
<g fill="#fff" stroke="#8fd07a" stroke-width="1.3"><circle cx="66.5" cy="465" r="2"/><circle cx="99.5" cy="465" r="2"/></g>
<g fill="#666">
<rect x="57" y="455" width="14" height="1.3"/><rect x="91" y="455.5" width="20" height="1.3"/><rect x="91" y="458" width="8" height="1.3"/><rect x="125" y="455" width="18" height="1.3"/>
<rect x="64" y="472" width="19" height="1.3"/><rect x="64" y="475" width="15" height="1.3"/><rect x="98" y="472" width="18" height="1.3"/><rect x="98" y="475" width="10" height="1.3"/>
<rect x="131" y="473" width="24" height="1.3"/><rect x="131" y="476" width="12" height="1.3"/>
<rect x="78" y="489" width="21" height="1.3"/><rect x="116" y="489" width="12" height="1.3"/>
</g>
<!-- thumb 17 -->
<path d="M46.5 537.9h6l-1.2 4.7h-4.8z" fill="#2f6fd0"/><path d="M53.5 542.6l2.6-4.7" stroke="#3f80d8" stroke-width="1.4"/>
<rect x="58" y="539" width="23" height="3" fill="#2a2a2a"/>
<path d="M46 550h12v52h-12z" fill="#e6edf7"/>
<path d="M58 602v-50.5l1.3-2 4.7 3v49.5z" fill="#8fb0dc"/>
<path d="M66 602v-52.3l57.9 52.3z" fill="#a9c3e6"/>
<path d="M71.1 602v-42l49 42z" fill="#4f80c0"/>
<rect x="78.6" y="578" width="2.9" height="24" fill="#d6e3f4"/>
<g stroke="#7fa3d6" stroke-width=".6" fill="none"><path d="M82 583l30 19M82 590l18 12M90 578v24M98 583v19M106 590v12M82 576l12 6"/></g>
<path d="M66.8 553.1h8" stroke="#c8c8c8" stroke-width=".6"/>
<rect x="75.8" y="551.7" width="4" height="1.2" fill="#b0b0b0"/>
<rect x="81.8" y="551.5" width="13.8" height="1.3" fill="#444"/>
<path d="M73.4 558.8h8" stroke="#c8c8c8" stroke-width=".6"/>
<rect x="82.4" y="557.4" width="4" height="1.2" fill="#b0b0b0"/>
<rect x="88.4" y="557.2" width="27.0" height="1.3" fill="#444"/>
<path d="M79.5 564.4h8" stroke="#c8c8c8" stroke-width=".6"/>
<rect x="88.5" y="563.0" width="4" height="1.2" fill="#b0b0b0"/>
<rect x="94.5" y="562.8" width="18.1" height="1.3" fill="#444"/>
<path d="M86.1 570.1h8" stroke="#c8c8c8" stroke-width=".6"/>
<rect x="95.1" y="568.7" width="4" height="1.2" fill="#b0b0b0"/>
<rect x="101.1" y="568.5" width="35.5" height="1.3" fill="#444"/>
<path d="M92.7 575.7h8" stroke="#c8c8c8" stroke-width=".6"/>
<rect x="101.7" y="574.3" width="4" height="1.2" fill="#b0b0b0"/>
<rect x="107.7" y="574.1" width="27.5" height="1.3" fill="#444"/>
<path d="M99.3 581.2h8" stroke="#c8c8c8" stroke-width=".6"/>
<rect x="108.3" y="579.8" width="4" height="1.2" fill="#b0b0b0"/>
<rect x="114.3" y="579.6" width="35.5" height="1.3" fill="#444"/>
<path d="M105.5 587.0h8" stroke="#c8c8c8" stroke-width=".6"/>
<rect x="114.5" y="585.6" width="4" height="1.2" fill="#b0b0b0"/>
<rect x="120.5" y="585.4" width="21.8" height="1.3" fill="#444"/>
<path d="M112.0 592.7h8" stroke="#c8c8c8" stroke-width=".6"/>
<rect x="121.0" y="591.3" width="4" height="1.2" fill="#b0b0b0"/>
<rect x="127.0" y="591.1" width="12.4" height="1.3" fill="#444"/>
<!-- cursor -->
<path d="M202.5 26.5v23l5.3-5 3.6 7.6 3.2-1.4-3.5-7.2h8z" fill="#fff" stroke="#000" stroke-width="1.1" stroke-linejoin="miter"/>
</svg>
</body></html>
